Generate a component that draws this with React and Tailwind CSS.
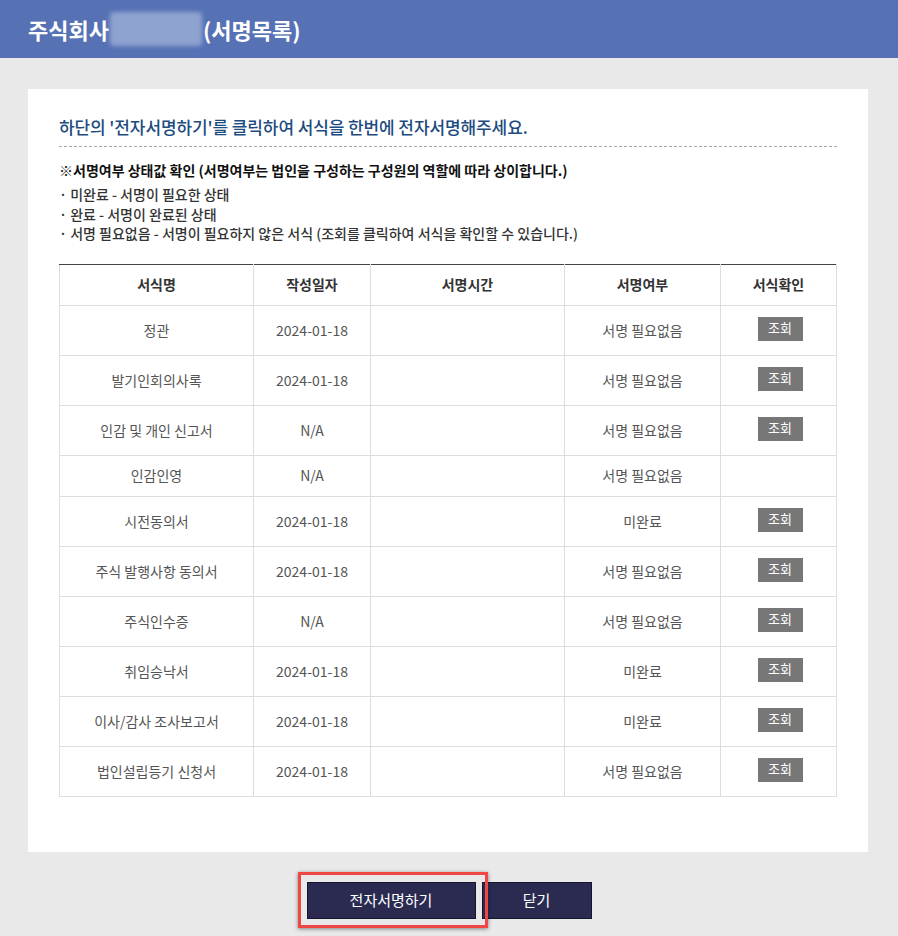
import React from "react";

const rows = [
  { name: "정관", date: "2024-01-18", status: "서명 필요없음", view: true },
  { name: "발기인회의사록", date: "2024-01-18", status: "서명 필요없음", view: true },
  { name: "인감 및 개인 신고서", date: "N/A", status: "서명 필요없음", view: true },
  { name: "인감인영", date: "N/A", status: "서명 필요없음", view: false },
  { name: "시전동의서", date: "2024-01-18", status: "미완료", view: true },
  { name: "주식 발행사항 동의서", date: "2024-01-18", status: "서명 필요없음", view: true },
  { name: "주식인수증", date: "N/A", status: "서명 필요없음", view: true },
  { name: "취임승낙서", date: "2024-01-18", status: "미완료", view: true },
  { name: "이사/감사 조사보고서", date: "2024-01-18", status: "미완료", view: true },
  { name: "법인설립등기 신청서", date: "2024-01-18", status: "서명 필요없음", view: true },
];

const font = { fontFamily: '"Noto Sans CJK KR", "Noto Sans", sans-serif' };

export default function App() {
  return (
    <div className="min-h-[936px] bg-[#e9e9e9]" style={font}>
      <div className="h-[58px] bg-[#5672b5] px-[28px] flex items-center text-white text-[22px] font-bold">
        <span>주식회사</span>
        <span className="inline-block w-[92px] h-[34px] mx-[1px] bg-[#8fa3d1] blur-[2px] rounded-sm" />
        <span>(서명목록)</span>
      </div>

      <div className="pt-[31px] pl-[28px] pr-[30px]">
        <div className="bg-white pt-[26px] pb-[55px] px-[31px]">
          <div className="text-[17px] leading-[24px] font-medium text-[#1d4c80] pb-[7px] border-b border-dashed border-[#aaa] tracking-[-0.1px]">
            하단의 '전자서명하기'를 클릭하여 서식을 한번에 전자서명해주세요.
          </div>
          <div className="mt-[13px] text-[14px] leading-[20px] font-bold text-[#111]">
            ※서명여부 상태값 확인 (서명여부는 법인을 구성하는 구성원의 역할에 따라 상이합니다.)
          </div>
          <ul className="mt-[5px] text-[14px] leading-[19.5px] text-[#333] font-medium">
            <li>· 미완료 - 서명이 필요한 상태</li>
            <li>· 완료 - 서명이 완료된 상태</li>
            <li>· 서명 필요없음 - 서명이 필요하지 않은 서식 (조회를 클릭하여 서식을 확인할 수 있습니다.)</li>
          </ul>

          <table className="mt-[20px] w-full border-collapse text-[14px] text-center">
            <thead>
              <tr className="h-[41px] border-t border-t-[#444]">
                <th className="w-[194px] border border-[#ddd] border-t-[#444] font-bold text-[#333]">서식명</th>
                <th className="w-[117px] border border-[#ddd] border-t-[#444] font-bold text-[#333]">작성일자</th>
                <th className="w-[194px] border border-[#ddd] border-t-[#444] font-bold text-[#333]">서명시간</th>
                <th className="w-[156px] border border-[#ddd] border-t-[#444] font-bold text-[#333]">서명여부</th>
                <th className="border border-[#ddd] border-t-[#444] font-bold text-[#333]">서식확인</th>
              </tr>
            </thead>
            <tbody>
              {rows.map((r) => (
                <tr key={r.name} className={r.view ? "h-[50px]" : "h-[41px]"}>
                  <td className="border border-[#ddd] text-[#555]">{r.name}</td>
                  <td className="border border-[#ddd] text-[#555]">{r.date}</td>
                  <td className="border border-[#ddd]"></td>
                  <td className="border border-[#ddd] text-[#555]">{r.status}</td>
                  <td className="border border-[#ddd]">
                    {r.view && (
                      <span className="inline-block w-[45px] h-[24px] leading-[22px] ml-[3px] mb-[3px] bg-[#777] text-white text-[13px] align-middle">
                        조회
                      </span>
                    )}
                  </td>
                </tr>
              ))}
            </tbody>
          </table>
        </div>
      </div>

      <div className="pt-[30px] flex justify-center gap-[6px]">
        <div className="relative">
          <button className="w-[169px] h-[37px] bg-[#2b2b52] border border-[#15152e] text-white text-[15px]">
            전자서명하기
          </button>
          <div className="absolute -left-[9px] -top-[10px] w-[190px] h-[56px] border-[3px] border-[#ef4646] shadow-[0_1px_4px_rgba(0,0,0,0.45)] pointer-events-none" />
        </div>
        <button className="w-[110px] h-[37px] bg-[#2b2b52] border border-[#15152e] text-white text-[15px]">
          닫기
        </button>
      </div>
    </div>
  );
}
